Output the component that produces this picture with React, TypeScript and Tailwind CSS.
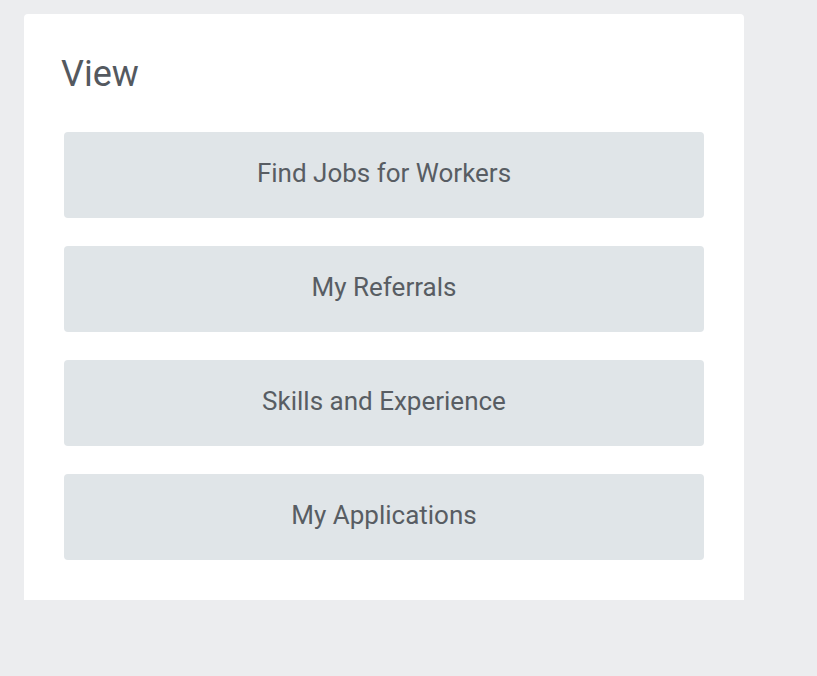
const items = [
  "Find Jobs for Workers",
  "My Referrals",
  "Skills and Experience",
  "My Applications",
];

function App() {
  return (
    <main className="min-h-[676px] bg-[#ecedef] pt-[14px] pl-6 font-['Roboto',sans-serif]">
      <section className="w-[720px] rounded-t bg-white px-10 pb-10 pt-[36px]">
        <h1 className="ml-[-3px] text-[36px] leading-[48px] text-[#54595f]">
          View
        </h1>

        <div className="mt-[34px] flex flex-col gap-7">
          {items.map((label) => (
            <button
              key={label}
              className="flex h-[86px] w-[640px] items-center justify-center rounded bg-[#e0e5e8] pb-1 text-[26px] text-[#585d63]"
            >
              {label}
            </button>
          ))}
        </div>
      </section>
    </main>
  );
}

export default App;
